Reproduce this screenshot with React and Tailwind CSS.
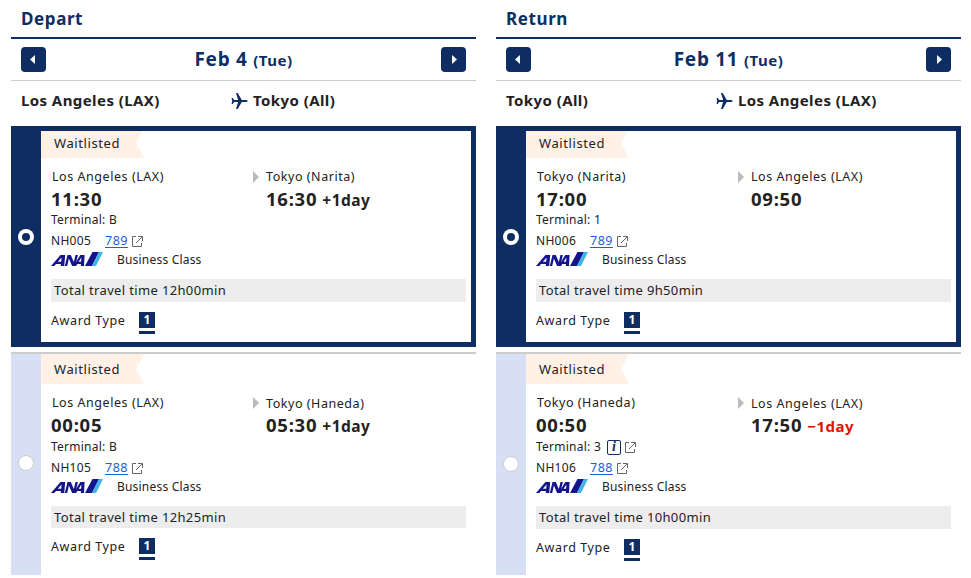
const trips = [
  {
    title: 'Depart', date: 'Feb 4', day: '(Tue)', from: 'Los Angeles (LAX)', to: 'Tokyo (All)',
    flights: [
      { selected: true, from: 'Los Angeles (LAX)', dep: '11:30', to: 'Tokyo (Narita)', arr: '16:30', shift: '+1day', terminal: 'B', no: 'NH005', craft: '789', total: '12h00min' },
      { from: 'Los Angeles (LAX)', dep: '00:05', to: 'Tokyo (Haneda)', arr: '05:30', shift: '+1day', terminal: 'B', no: 'NH105', craft: '788', total: '12h25min' },
    ],
  },
  {
    title: 'Return', date: 'Feb 11', day: '(Tue)', from: 'Tokyo (All)', to: 'Los Angeles (LAX)',
    flights: [
      { selected: true, from: 'Tokyo (Narita)', dep: '17:00', to: 'Los Angeles (LAX)', arr: '09:50', terminal: '1', no: 'NH006', craft: '789', total: '9h50min' },
      { from: 'Tokyo (Haneda)', dep: '00:50', to: 'Los Angeles (LAX)', arr: '17:50', shift: '−1day', minus: true, terminal: '3', info: true, no: 'NH106', craft: '788', total: '10h00min' },
    ],
  },
];

function ArrowButton({ next }) {
  return (
    <button className="flex h-[25px] w-[25px] items-center justify-center rounded-[4px] bg-[#0e2e63]">
      <svg width="25" height="25" viewBox="0 0 25 25" fill="#fff">
        {next ? <path d="M11 8v9l5-4.5z" /> : <path d="M14 8v9l-5-4.5z" />}
      </svg>
    </button>
  );
}

function Plane() {
  return (
    <svg className="relative top-px shrink-0" width="17" height="16" viewBox="0 0 17 16" fill="#0e2e63">
      <path d="M5 0h1.700l4.100 7h4Q16.700 7.200 16.700 8t-1.900 1h-4L6.700 16H5l2.100-7H3.200L1.800 11H.6L1.200 8 .6 5h1.200L3.200 7h3.900z" />
    </svg>
  );
}

function ExternalIcon() {
  return (
    <svg className="shrink-0" width="11" height="11" viewBox="0 0 11 11" fill="none" stroke="#666" strokeWidth="1">
      <path d="M4 .5H.5v10h9V7M6 .5h4.500V5M10.200.8 4 7" />
    </svg>
  );
}

function AnaLogo() {
  return (
    <svg className="mb-[2px]" width="52" height="14" viewBox="0 0 52 14">
      <g fill="#14148c">
        <path fillRule="evenodd" d="M0 14 9.500 3h4.700l-1 11H9.700l.3-2H5l-1.700 2zM6.800 9.800h3.400l.4-4.300z" />
        <path d="M13.800 14 16.500 3h3.300l3 7L24.500 3h2.400l-2.700 11h-3.100l-3.200-7.500L16.200 14z" />
        <path fillRule="evenodd" d="M22.500 14 29.300 3h4.300l-.6 11h-3.200l.2-2h-3.700l-1.200 2zM27.600 9.800h2.500l.3-4.300z" />
        <path d="M41.500 0h6.500l-7 14h-7z" />
      </g>
      <path d="M48 0h4l-7 14h-4z" fill="#3fb4e8" />
    </svg>
  );
}

function Radio({ selected }) {
  return selected ? (
    <span className="flex h-4 w-4 items-center justify-center rounded-full bg-white">
      <span className="h-2 w-2 rounded-full bg-[#0e2e63]" />
    </span>
  ) : (
    <span className="h-4 w-4 rounded-full border border-[#ccc] bg-white" />
  );
}

function Flight({ f }) {
  const sel = f.selected;
  return (
    <article
      className={
        sel
          ? 'flex h-[221px] border-y-[5px] border-r-[5px] border-[#0e2e63]'
          : 'mt-[5px] flex h-[223px] border-t-2 border-[#ccc]'
      }
    >
      <div className={sel ? 'flex w-[30px] items-center justify-center bg-[#0e2e63]' : f.info ? 'flex w-[30px] items-center justify-center bg-[#d7dff4] pb-[1px]' : 'flex w-[30px] items-center justify-center bg-[#d7dff4] pb-[3px]'}>
        <Radio selected={sel} />
      </div>
      <div className="flex-1">
        <div className={sel ? 'h-[27px] w-[103px]' : 'h-[30px] w-[103px]'}>
          <div className={sel
            ? 'h-full bg-[#fff1e6] pl-[13px] text-[13px] leading-[25px] tracking-[0.6px] [clip-path:polygon(0_0,101px_0,95px_12px,103px_100%,0_100%)]'
            : 'h-full bg-[#fff1e6] pl-[13px] text-[13px] leading-[30px] tracking-[0.6px] [clip-path:polygon(0_0,103px_0,95px_15px,103px_100%,0_100%)]'}>
            Waitlisted
          </div>
        </div>
        <div className="mt-2 grid grid-cols-[201px_1fr] pl-[10px]">
          <div className="h-[22px] pl-px text-[12.500px] leading-[22px] tracking-[0.55px]">{f.from}</div>
          <div className={sel ? 'flex h-[22px] items-center text-[12.500px] leading-[22px] tracking-[0.55px]' : 'flex h-[22px] items-center text-[12.500px] tracking-[0.55px]'}>
            <svg className="mr-[7px]" width="7" height="12" viewBox="0 0 7 12" fill="#bbb"><path d="M1 0v12l6-6z" /></svg>
            <span className={sel ? '' : 'pt-[2px]'}>{f.to}</span>
          </div>
          <div className={sel ? 'h-[22px] text-[18.500px] leading-[21px] font-bold tracking-[0.75px]' : 'h-[23px] text-[18.500px] leading-[21px] font-bold tracking-[0.75px]'}>{f.dep}</div>
          <div className="flex h-[22px] items-baseline pl-[14px] text-[18.500px] leading-[21px] font-bold tracking-[0.75px]">
            {f.arr}
            {f.shift && <span className={f.minus ? 'ml-[5px] text-[15px] tracking-[0.5px] text-[#dc1400]' : 'ml-[5px] text-[15.500px] tracking-[0.5px]'}>{f.shift}</span>}
          </div>
        </div>
        <div className="flex h-5 items-center pl-[10px] text-[12px] tracking-[0.25px]">
          Terminal: {f.terminal}
          {f.info && (
            <span className="mr-1 ml-[6px] flex h-[15px] w-[14px] items-center justify-center rounded-[2px] border border-[#0e2e63] font-['Liberation_Serif',serif] text-[14px] leading-none font-bold text-[#0e2e63] italic">i</span>
          )}
          {f.info && <ExternalIcon />}
        </div>
        <div className="flex h-[22px] items-center pl-[10px] text-[12px] tracking-[0.3px]">
          <span className="w-[54px]">{f.no}</span>
          <a className="mr-1 text-[12.500px] tracking-[0.5px] text-[#1a5fe0] underline underline-offset-2">{f.craft}</a>
          <ExternalIcon />
        </div>
        <div className="flex h-4 items-center pl-[10px] text-[12px] tracking-[0.2px]">
          <AnaLogo />
          <span className="ml-[14px]">Business Class</span>
        </div>
        <div className={sel
          ? 'mt-[11px] mr-[5px] ml-[10px] h-[23px] bg-[#ededed] pl-[3px] text-[13px] leading-[23px] tracking-[0.35px]'
          : f.info
            ? 'mt-[11px] mr-[10px] ml-[10px] h-[23px] bg-[#ededed] pl-[3px] text-[13px] leading-[23px] tracking-[0.35px]'
            : 'mt-[11px] mr-[10px] ml-[10px] h-[22px] bg-[#ededed] pl-[3px] text-[13px] leading-[23px] tracking-[0.35px]'}>
          Total travel time {f.total}
        </div>
        <div className="mt-2 flex h-[24px] pl-[10px] text-[12.500px] leading-[22px] tracking-[0.6px]">
          <span className="w-[88px]">Award Type</span>
          <span className="mt-[2px] flex h-[22px] w-4 flex-col justify-between">
            <span className="h-4 bg-[#0e2e63] text-center text-[12px] leading-4 font-bold tracking-normal text-white">1</span>
            <span className="h-[3px] bg-[#0e2e63]" />
          </span>
        </div>
      </div>
    </article>
  );
}

function Trip({ t }) {
  return (
    <section className="w-[465px]">
      <h2 className="h-[39px] border-b-2 border-[#0e2e63] pl-[10px] text-[17px] leading-[37px] font-bold tracking-[0.6px] text-[#0e2e63]">{t.title}</h2>
      <div className="flex h-[42px] items-center justify-between border-b border-[#ccc] px-[10px]">
        <ArrowButton />
        <div className="text-[19px] font-bold tracking-[0.7px] text-[#0e2e63]">
          {t.date} <span className="text-[15px] tracking-[0.5px]">{t.day}</span>
        </div>
        <ArrowButton next />
      </div>
      <div className="flex h-[45px] items-center pb-[7px] pl-[10px] text-[15px] font-bold tracking-[0.42px]">
        <span className="w-[210px]">{t.from}</span>
        <Plane />
        <span className="ml-[5px]">{t.to}</span>
      </div>
      {t.flights.map((f) => <Flight key={f.no} f={f} />)}
    </section>
  );
}

export default function App() {
  return (
    <main className="flex h-[578px] w-[971px] gap-5 overflow-hidden bg-white pl-[11px] font-['Noto_Sans','Open_Sans',sans-serif] text-[#222]">
      {trips.map((t) => <Trip key={t.title} t={t} />)}
    </main>
  );
}
